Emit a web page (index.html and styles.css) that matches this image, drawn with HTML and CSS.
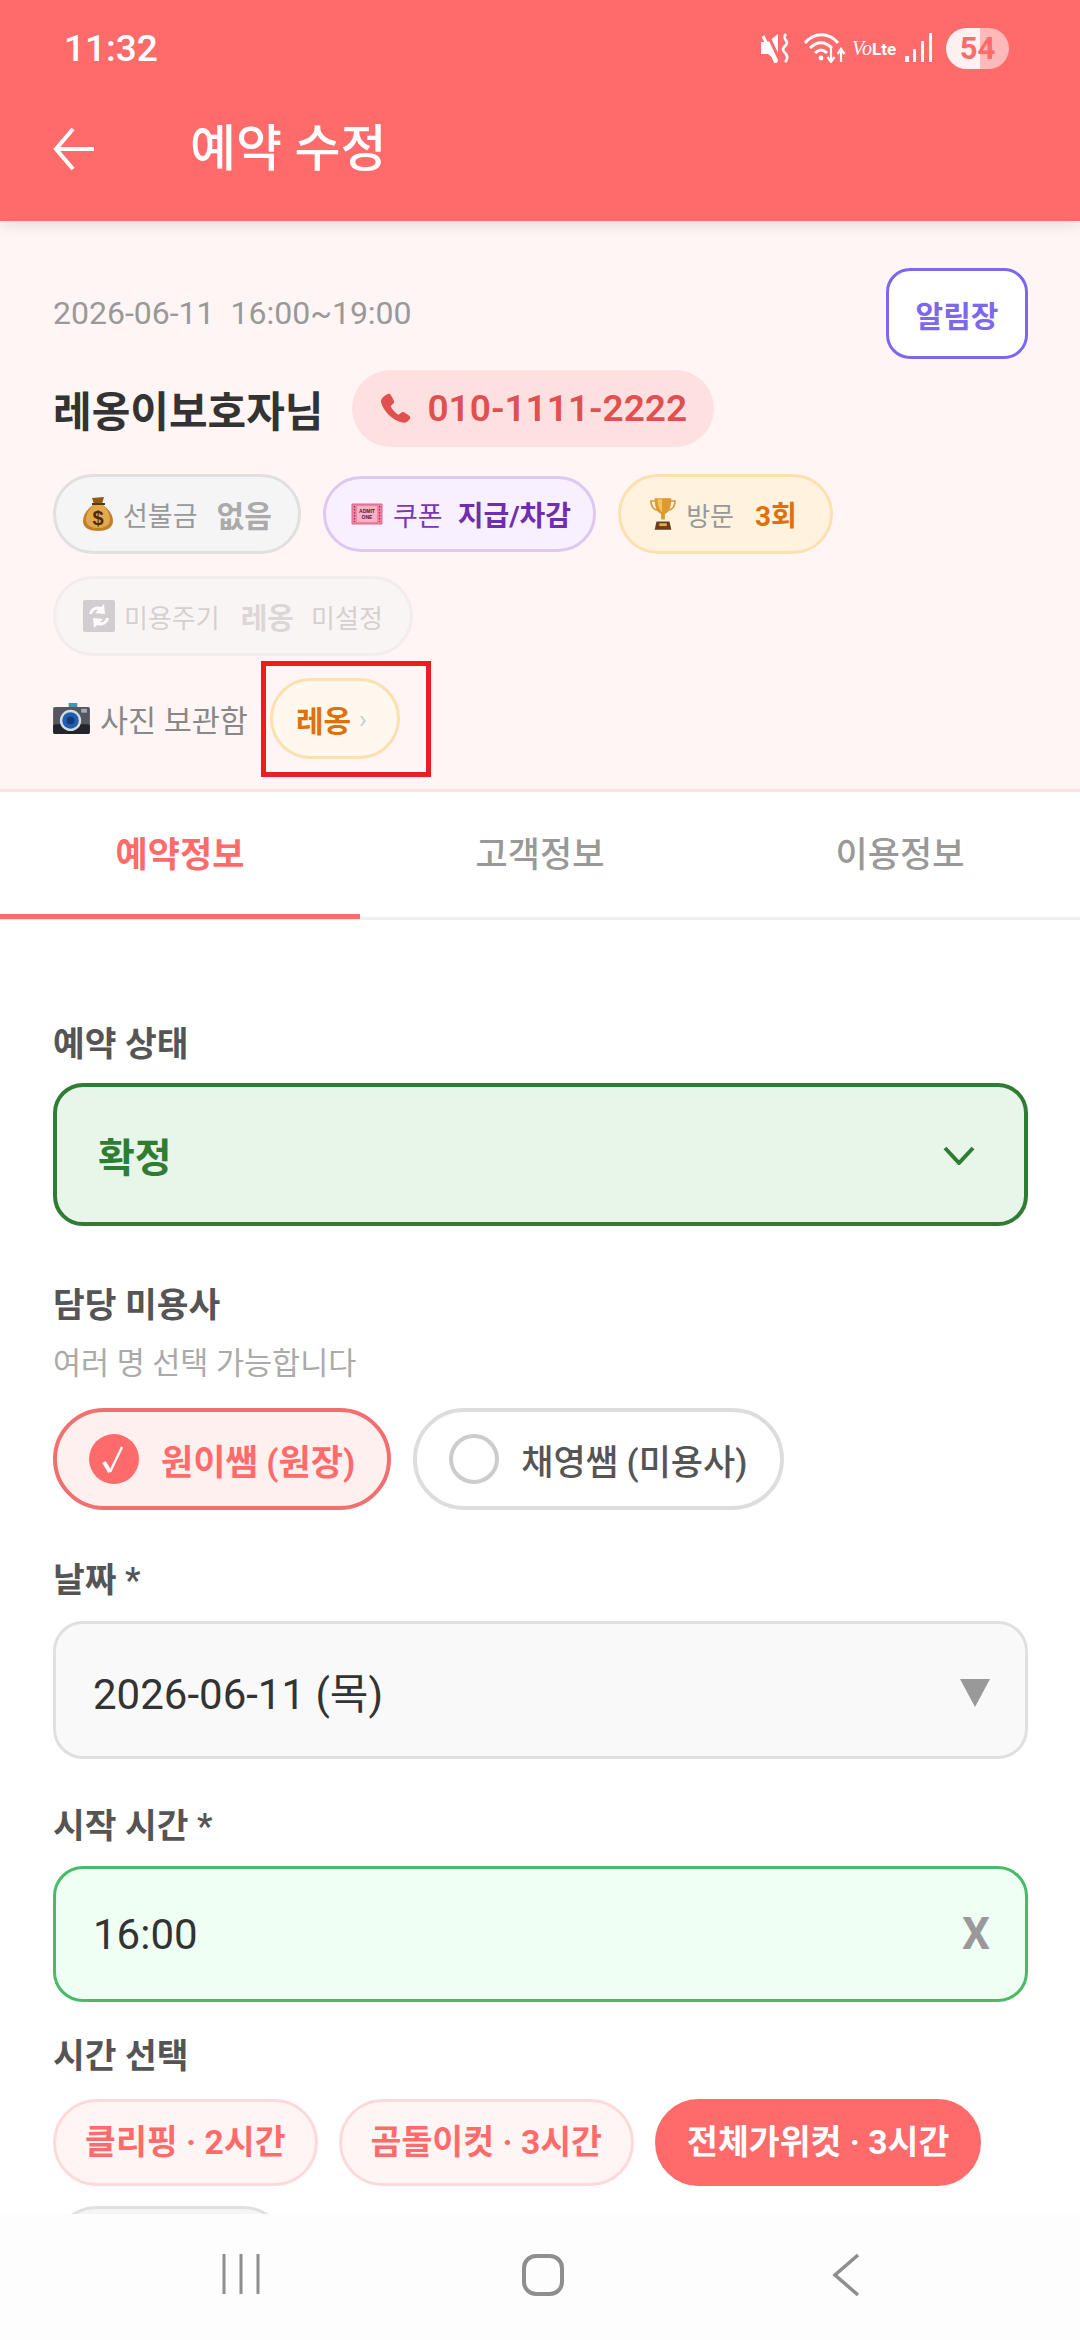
FILE: index.html
```html
<!DOCTYPE html>
<html lang="ko">
<head>
  <meta charset="UTF-8" />
  <meta name="viewport" content="width=device-width, initial-scale=1.0" />
  <title>예약 수정</title>
  <link rel="stylesheet" href="styles.css">
</head>
<body>
  <div class="page">
    <header class="appbar">
      <div class="statusbar">
        <span class="clock">11:32</span>
        <div class="status-icons">
          <svg class="ic-mute" viewBox="0 0 30 30" width="30" height="30">
            <path d="M0 9h7l10-8v28L7 21H0z" fill="#fff"/>
            <path d="M6 0l14 30" stroke="#ff6b6b" stroke-width="3"/>
            <path d="M2 3l13 27" stroke="#fff" stroke-width="3"/>
            <path d="M25 1c-5 5 4 7 0 11s-4 5 0 9c2 3 1 6-1 8" fill="none" stroke="#fff" stroke-width="2.6"/>
          </svg>
          <svg class="ic-wifi" viewBox="0 0 42 30" width="42" height="30">
            <path d="M1 10C10-1 25-1 34 10M6 15c7-7 15-7 22 0M11 20c4-4 8-4 12 0" fill="none" stroke="#fff" stroke-width="3"/>
            <circle cx="17" cy="25" r="2.4" fill="#fff"/>
            <path d="M27 15v13M23.500 24l3.500 5 3.500-5M37 29V17M33.500 21l3.500-5 3.500 5" fill="none" stroke="#fff" stroke-width="2.2"/>
          </svg>
          <span class="volte"><i>Vo</i><b>Lte</b></span>
          <svg class="ic-signal" viewBox="0 0 28 30" width="28" height="30">
            <rect x="0" y="23" width="4" height="6" fill="#fff"/>
            <rect x="8" y="16" width="3" height="13" fill="#fff"/>
            <rect x="16" y="8" width="3" height="21" fill="#fff"/>
            <rect x="24" y="0" width="3" height="29" fill="#fff"/>
          </svg>
          <span class="battery">54</span>
        </div>
      </div>
      <div class="titlebar">
        <svg class="back" viewBox="0 0 42 42" width="42" height="42">
          <path d="M41 21H3M20 1L3 21l17 20" fill="none" stroke="#fff" stroke-width="4"/>
        </svg>
        <h1>예약 수정</h1>
      </div>
    </header>

    <section class="summary">
      <div class="summary-top">
        <div class="when">2026-06-11&nbsp;&nbsp;16:00~19:00</div>
        <button class="notice-btn">알림장</button>
      </div>
      <div class="who">
        <span class="name">레옹이보호자님</span>
        <span class="phone">
          <svg viewBox="0 0 24 24" width="34" height="34">
            <path d="M6.600 1.500c1-.6 2-.3 2.500.7l2 3.700c.4.900.3 1.700-.4 2.400l-1.700 1.500c.9 2.500 3.200 5 5.500 6.300l1.800-1.500c.7-.6 1.500-.7 2.300-.2l3.300 2.100c1 .6 1.100 1.700.5 2.500-1.300 1.900-3 3.100-5 2.600C10 20 3.600 13.200 2.200 7.200 1.700 4.900 4 2.800 6.600 1.500z" fill="#e05050"/>
          </svg>
          010-1111-2222
        </span>
      </div>
      <div class="tag-row">
        <span class="tag tag-gray">
          <svg class="emoji" viewBox="0 0 30 34" width="30" height="34">
            <path d="M10 8C3 13 0 19 0 24c0 7 7 10 15 10s15-3 15-10c0-5-3-11-10-16z" fill="#c08028"/>
            <path d="M11 8C5 13 3 18 3 23c0 5 5 8 12 8s12-3 12-8c0-5-2-10-7-15z" fill="#e3a94e"/>
            <path d="M9 1l12-1-2 7h-8z" fill="#8f5a1c"/>
            <path d="M9 7h13" stroke="#5e3610" stroke-width="2"/>
            <text x="15" y="28" class="dollar">$</text>
          </svg>
          <span class="tag-label">선불금</span>
          <b class="val-gray">없음</b>
        </span>
        <span class="tag tag-purple">
          <svg class="emoji" viewBox="0 0 32 22" width="32" height="22">
            <path d="M1 1h30v20H1z" fill="#f2809f" stroke="#d8688a" stroke-width="1"/>
            <rect x="6" y="3" width="20" height="16" fill="#fab0c6"/>
            <path d="M3.500 3v16M28.500 3v16" stroke="#8a3a58" stroke-width="1.2" stroke-dasharray="1.500 1.500"/>
            <text x="16" y="10" class="admit">ADMIT</text>
            <text x="16" y="15.500" class="admit">ONE</text>
          </svg>
          <span class="tag-label label-purple">쿠폰</span>
          <b class="val-purple">지급/차감</b>
        </span>
        <span class="tag tag-orange">
          <svg class="emoji" viewBox="0 0 28 34" width="26" height="32">
            <path d="M6 3H1c0 6 3 9 7 10M22 3h5c0 6-3 9-7 10" fill="none" stroke="#d89a3a" stroke-width="1.8"/>
            <path d="M5 0h18c0 9-2 15-7 17v6h-4v-6C7 15 5 9 5 0z" fill="#dd9a30"/>
            <path d="M8 1h5c0 7 0 11 0 14-3-2-5-8-5-14z" fill="#f2c262"/>
            <path d="M7 25h14l2 9H5z" fill="#6b3d1e"/>
            <rect x="10" y="27" width="8" height="3" fill="#e2b040"/>
          </svg>
          <span class="tag-label">방문</span>
          <b class="val-orange">3회</b>
        </span>
      </div>
      <div class="tag-row">
        <span class="tag tag-muted">
          <svg class="emoji" viewBox="0 0 32 32" width="32" height="32">
            <rect width="32" height="32" rx="2" fill="#8f949c"/>
            <path d="M6 14c1-6 7-9 12-7l3-3 1 10-10-1 3-3c-3-1-5 1-6 4z" fill="#fff"/>
            <path d="M26 18c-1 6-7 9-12 7l-3 3-1-10 10 1-3 3c3 1 5-1 6-4z" fill="#fff"/>
          </svg>
          <span class="tag-label">미용주기</span>
          <b class="val-gray">레옹</b>
          <span class="tag-label">미설정</span>
        </span>
      </div>
      <div class="photo-row">
        <svg class="emoji" viewBox="0 0 38 32" width="37" height="31">
          <rect x="16" y="0" width="9" height="5" fill="#3d9ab0"/>
          <rect x="0" y="4" width="38" height="28" rx="2" fill="#55565e"/>
          <rect x="0" y="22" width="38" height="10" rx="2" fill="#24252b"/>
          <rect x="29" y="6" width="6" height="4" fill="#a8a9ae"/>
          <circle cx="18" cy="18" r="11" fill="#d5dbe2"/>
          <circle cx="18" cy="18" r="8.5" fill="#1f5fae"/>
          <circle cx="18" cy="18" r="4" fill="#123a78"/>
        </svg>
        <span class="photo-label">사진 보관함</span>
        <span class="pet-wrap">
          <span class="pet-chip"><b>레옹</b><i>›</i></span>
          <span class="redbox"></span>
        </span>
      </div>
    </section>

    <nav class="tabs">
      <div class="tab active">예약정보</div>
      <div class="tab">고객정보</div>
      <div class="tab">이용정보</div>
    </nav>

    <main class="form">
      <div class="field field-status">
        <div class="label">예약 상태</div>
        <div class="status-select">
          <span>확정</span>
          <svg viewBox="0 0 32 20" width="32" height="20">
            <path d="M2 3l14 15L30 3" fill="none" stroke="#2e7d32" stroke-width="4"/>
          </svg>
        </div>
      </div>

      <div class="field field-staff">
        <div class="label">담당 미용사</div>
        <div class="hint">여러 명 선택 가능합니다</div>
        <div class="staff-row">
          <div class="staff on">
            <span class="check">
              <svg viewBox="0 0 50 50" width="50" height="50">
                <path d="M15 28l6 10" fill="none" stroke="#fff" stroke-width="4"/>
                <path d="M21 38l12-25" fill="none" stroke="#fff" stroke-width="2.4"/>
              </svg>
            </span>
            원이쌤 (원장)
          </div>
          <div class="staff"><span class="radio"></span>채영쌤 (미용사)</div>
        </div>
      </div>

      <div class="field field-date">
        <div class="label">날짜 *</div>
        <div class="input input-gray">
          <span>2026-06-11 (목)</span>
          <span class="arrow"></span>
        </div>
      </div>

      <div class="field field-time">
        <div class="label">시작 시간 *</div>
        <div class="input input-green">
          <span>16:00</span>
          <b class="clear">X</b>
        </div>
      </div>

      <div class="field">
        <div class="label">시간 선택</div>
        <div class="chips">
          <span class="chip">클리핑 · 2시간</span>
          <span class="chip">곰돌이컷 · 3시간</span>
          <span class="chip selected">전체가위컷 · 3시간</span>
          <span class="chip other">목욕 · 1시간</span>
        </div>
      </div>
    </main>

    <footer class="navbar">
      <svg viewBox="0 0 38 42" width="38" height="42">
        <path d="M2 1v40M19 1v40M36 1v40" stroke="#8e8e8e" stroke-width="3"/>
      </svg>
      <svg viewBox="0 0 44 44" width="44" height="44">
        <rect x="3" y="3" width="38" height="38" rx="12" fill="none" stroke="#8e8e8e" stroke-width="4"/>
      </svg>
      <svg viewBox="0 0 28 44" width="28" height="44">
        <path d="M26 2L3 22l23 20" fill="none" stroke="#8e8e8e" stroke-width="3.5"/>
      </svg>
    </footer>
  </div>
</body>
</html>
```

FILE: styles.css
```css
body {
  margin: 0;
  font-family: Roboto, "Noto Sans CJK KR", sans-serif;
  background: #fff;
  color: #333;
}
.page {
  position: relative;
  width: 1080px;
  height: 2340px;
  overflow: hidden;
}

/* app bar */
.appbar {
  position: relative;
  height: 221px;
  background: #ff6b6b;
  color: #fff;
  box-shadow: 0 4px 14px rgba(0, 0, 0, 0.1);
}
.statusbar {
  display: flex;
  justify-content: space-between;
  align-items: center;
  height: 96px;
  padding: 0 71px 0 64px;
}
.clock {
  font-size: 37px;
  font-weight: 500;
}
.status-icons {
  display: flex;
  align-items: center;
}
.ic-wifi {
  margin-left: 13px;
}
.volte {
  width: 42px;
  margin-left: 6px;
  font-size: 17px;
  line-height: 30px;
  white-space: nowrap;
}
.volte i {
  font-family: "Liberation Serif", serif;
  font-size: 20px;
}
.ic-signal {
  margin-left: 11px;
}
.battery {
  width: 63px;
  height: 41px;
  margin-left: 13px;
  border-radius: 21px;
  background: linear-gradient(90deg, #fff1f1 0 54%, #ffb9b9 54%);
  color: #ff6b6b;
  font-size: 31px;
  font-weight: 700;
  line-height: 41px;
  text-align: center;
}
.titlebar {
  display: flex;
  align-items: center;
  height: 105px;
  padding-left: 53px;
}
.titlebar h1 {
  margin: 0 0 0 95px;
  font-size: 50px;
  font-weight: 500;
  line-height: 60px;
}

/* summary */
.summary {
  height: 571px;
  box-sizing: border-box;
  padding: 47px 52px 0 53px;
  background: #fff5f5;
  border-bottom: 3px solid #ffe0e0;
}
.summary-top {
  display: flex;
  justify-content: space-between;
  align-items: center;
}
.when {
  margin-top: -2px;
  font-size: 32px;
  color: #999;
}
.notice-btn {
  width: 142px;
  height: 91px;
  padding: 0;
  background: #fff;
  border: 3px solid #7b68ee;
  border-radius: 24px;
  color: #7b68ee;
  font: 700 30px Roboto, "Noto Sans CJK KR", sans-serif;
}
.who {
  display: flex;
  align-items: center;
  gap: 29px;
  margin: 11px 0 27px;
}
.name {
  font-size: 42px;
  font-weight: 700;
  color: #333;
}
.phone {
  display: flex;
  align-items: center;
  gap: 15px;
  height: 77px;
  padding: 0 27px 0 26px;
  border-radius: 39px;
  background: #ffe0e0;
  color: #e05050;
  font-size: 37px;
  font-weight: 600;
}
.tag-row {
  display: flex;
  align-items: center;
  gap: 22px;
  height: 80px;
  margin-bottom: 22px;
}
.tag {
  display: flex;
  align-items: center;
  box-sizing: border-box;
  height: 80px;
  padding: 0 27px;
  border: 3px solid #e0e0e0;
  border-radius: 40px;
  font-size: 27px;
  white-space: nowrap;
}
.tag b {
  margin-left: 21px;
  font-size: 28px;
}
.tag-label {
  margin-left: 10px;
  color: #999;
}
.tag-gray {
  width: 248px;
  padding: 0 0 0 27px;
  background: #f5f5f5;
}
.tag-gray b {
  margin-left: 19px;
  font-size: 30px;
}
.val-gray {
  color: #aaa;
}
.tag-purple {
  height: 76px;
  padding: 0 22px 0 25px;
  background: #f8f0ff;
  border-color: #dcc8f2;
}
.tag-purple b {
  margin-left: 15px;
}
.label-purple {
  color: #7b35b5;
}
.val-purple {
  color: #6f2db0;
}
.tag-orange {
  background: #fff3e0;
  border-color: #fde0b0;
  padding: 0 33px 0 29px;
  font-size: 26px;
}
.val-orange {
  color: #e07008;
}
.tag-muted {
  opacity: 0.4;
  background: #f5f5f5;
  font-size: 26px;
}
.tag-muted b {
  margin-right: 8px;
  font-size: 29px;
}
.tag-muted .tag-label {
  margin-left: 9px;
}
.emoji {
  flex: none;
}
.dollar {
  font: 700 20px "Liberation Sans", sans-serif;
  fill: #4f2a08;
  text-anchor: middle;
}
.admit {
  font: 700 5px "Liberation Sans", sans-serif;
  fill: #4a2030;
  text-anchor: middle;
}
.photo-row {
  display: flex;
  align-items: center;
  height: 81px;
}
.photo-label {
  margin: 0 22px 0 10px;
  font-size: 30.5px;
  color: #888;
}
.pet-wrap {
  position: relative;
  display: block;
}
.pet-chip {
  display: flex;
  align-items: center;
  box-sizing: border-box;
  width: 130px;
  height: 81px;
  padding-left: 23px;
  background: #fff8ee;
  border: 3px solid #fde0b0;
  border-radius: 41px;
  color: #e07008;
  font-size: 30px;
}
.pet-chip i {
  margin-left: 8px;
  font-style: normal;
  font-size: 26px;
  color: #ccc;
}
/* annotation drawn over the screenshot */
.redbox {
  position: absolute;
  left: -9px;
  top: -17px;
  width: 170px;
  height: 116px;
  box-sizing: border-box;
  border: 5px solid #ed1c24;
}

/* tabs */
.tabs {
  display: flex;
  height: 128px;
  box-sizing: border-box;
  border-bottom: 3px solid #eee;
}
.tab {
  flex: 1;
  margin-bottom: -2px;
  padding-top: 39px;
  font-size: 35px;
  font-weight: 500;
  line-height: 50px;
  color: #999;
  text-align: center;
}
.tab.active {
  border-bottom: 5px solid #ff6b6b;
  color: #ff6b6b;
  font-weight: 700;
}

/* form */
.form {
  padding: 101px 52px 0 53px;
}
.field-status {
  margin-bottom: 56px;
}
.field-staff {
  margin-bottom: 47px;
}
.field-date {
  margin-bottom: 44px;
}
.field-date .label {
  margin-bottom: 18px;
}
.field-time {
  margin-bottom: 31px;
}
.field-time .label {
  margin-bottom: 17px;
}
.label {
  margin-bottom: 16px;
  font-size: 34.5px;
  font-weight: 600;
  line-height: 46px;
  color: #555;
}
.status-select {
  display: flex;
  justify-content: space-between;
  align-items: center;
  box-sizing: border-box;
  height: 143px;
  padding: 0 49px 0 41px;
  background: #e8f5e9;
  border: 4px solid #2e7d32;
  border-radius: 30px;
  color: #2e7d32;
  font-size: 40px;
  font-weight: 700;
}
.hint {
  margin: 6px 0 24px;
  font-size: 30.5px;
  line-height: 40px;
  color: #aaa;
}
.staff-row {
  display: flex;
  gap: 22px;
}
.staff {
  display: flex;
  align-items: center;
  gap: 22px;
  box-sizing: border-box;
  height: 102px;
  padding: 0 32px;
  background: #fff;
  border: 4px solid #ddd;
  border-radius: 51px;
  font-size: 35px;
  font-weight: 500;
  color: #555;
}
.staff.on {
  background: #fff0f0;
  border-color: #f07070;
  color: #ff6b6b;
  font-weight: 700;
}
.check,
.radio {
  display: block;
  box-sizing: border-box;
  width: 50px;
  height: 50px;
  border-radius: 50%;
}
.check {
  background: #ff6b6b;
}
.check svg {
  display: block;
}
.radio {
  border: 4px solid #ccc;
}
.input {
  display: flex;
  justify-content: space-between;
  align-items: center;
  box-sizing: border-box;
  padding: 0 35px 0 37px;
  border-radius: 30px;
  font-size: 42px;
  color: #333;
}
.input-gray {
  height: 138px;
  background: #f9f9f9;
  border: 3px solid #e0e0e0;
}
.input-green {
  height: 136px;
  background: #f0fff4;
  border: 3px solid #48bb68;
}
.arrow {
  width: 0;
  height: 0;
  margin-top: 6px;
  border-left: 15px solid transparent;
  border-right: 15px solid transparent;
  border-top: 28px solid #999;
}
.clear {
  font-size: 44px;
  color: #999;
}
.chips {
  display: flex;
  flex-wrap: wrap;
  gap: 20px 21px;
  margin-top: 20px;
}
.chip {
  box-sizing: border-box;
  height: 87px;
  padding: 0 29px;
  background: #fff5f5;
  border: 3px solid #ffd9d9;
  border-radius: 44px;
  color: #ff6b6b;
  font-size: 33.6px;
  font-weight: 700;
  line-height: 81px;
}
.chip.selected {
  background: #ff6b6b;
  border-color: #ff6b6b;
  color: #fff;
}
.chip.other {
  background: #f5f5f5;
  border-color: #e0e0e0;
  color: #888;
}

/* system navigation */
.navbar {
  position: absolute;
  left: 0;
  right: 0;
  bottom: 0;
  height: 126px;
  background: #fdfdfd;
}
.navbar svg {
  position: absolute;
  top: 39px;
}
.navbar svg:nth-child(1) { left: 222px; }
.navbar svg:nth-child(2) { left: 521px; }
.navbar svg:nth-child(3) { left: 832px; }
```
